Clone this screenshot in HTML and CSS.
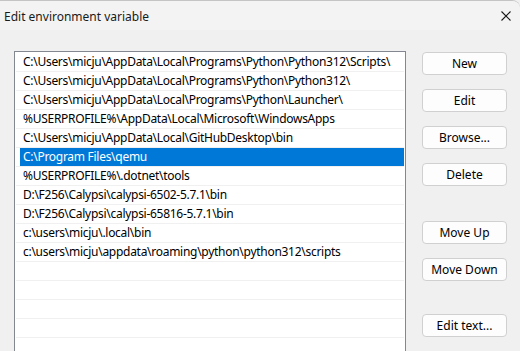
FILE: index.html
```html
<!DOCTYPE html>
<html lang="en">
<head>
    <meta charset="UTF-8">
    <meta name="viewport" content="width=device-width, initial-scale=1.0">
    <title>Edit environment variable</title>
    <link rel="stylesheet" href="styles.css">
</head>
<body>
    <div class="window">
        <div class="titlebar">
            <span class="title">Edit environment variable</span>
            <svg class="close" width="12" height="12" viewBox="0 0 12 12">
                <path d="M1.5 1.5 L10.5 10.5 M10.5 1.5 L1.5 10.5" stroke="#1a1a1a" stroke-width="1.1" fill="none"/>
            </svg>
        </div>

        <div class="content">
            <div class="path-list">
                <div class="row"><span class="cell">C:\Users\micju\AppData\Local\Programs\Python\Python312\Scripts\</span></div>
                <div class="row"><span class="cell">C:\Users\micju\AppData\Local\Programs\Python\Python312\</span></div>
                <div class="row"><span class="cell">C:\Users\micju\AppData\Local\Programs\Python\Launcher\</span></div>
                <div class="row"><span class="cell">%USERPROFILE%\AppData\Local\Microsoft\WindowsApps</span></div>
                <div class="row"><span class="cell">C:\Users\micju\AppData\Local\GitHubDesktop\bin</span></div>
                <div class="row selected"><span class="cell">C:\Program Files\qemu</span></div>
                <div class="row"><span class="cell">%USERPROFILE%\.dotnet\tools</span></div>
                <div class="row"><span class="cell">D:\F256\Calypsi\calypsi-6502-5.7.1\bin</span></div>
                <div class="row"><span class="cell">D:\F256\Calypsi\calypsi-65816-5.7.1\bin</span></div>
                <div class="row"><span class="cell">c:\users\micju\.local\bin</span></div>
                <div class="row"><span class="cell">c:\users\micju\appdata\roaming\python\python312\scripts</span></div>
                <div class="row"><span class="cell"></span></div>
                <div class="row"><span class="cell"></span></div>
                <div class="row"><span class="cell"></span></div>
                <div class="row"><span class="cell"></span></div>
                <div class="row"><span class="cell"></span></div>
            </div>

            <div class="actions">
                <button>New</button>
                <button>Edit</button>
                <button>Browse...</button>
                <button>Delete</button>
                <button class="group-start">Move Up</button>
                <button>Move Down</button>
                <button class="edit-text">Edit text...</button>
            </div>
        </div>
    </div>
</body>
</html>
```

FILE: styles.css
```css
html, body {
    margin: 0;
    padding: 0;
    overflow: hidden;
}

body {
    font-family: 'Noto Sans', 'Open Sans', sans-serif;
    font-size: 12px;
    color: #000;
    background-color: #f0f0f0;
}

.window {
    width: 520px;
    height: 351px;
    box-sizing: border-box;
    border-top: 1px solid #c4c4c4;
    border-top-right-radius: 8px;
    background-color: #f0f0f0;
    overflow: hidden;
}

.titlebar {
    height: 29px;
    display: flex;
    align-items: center;
    justify-content: space-between;
    padding: 1px 8px 0 4px;
    box-sizing: border-box;
    background-color: #f3f3f3;
}

.title {
    color: #1a1a1a;
}

.close {
    display: block;
}

.content {
    display: flex;
    align-items: flex-start;
    padding: 21px 0 0 14px;
}

.path-list {
    width: 392px;
    height: 320px;
    box-sizing: border-box;
    border: 1px solid #828790;
    background-color: #fff;
    padding: 1px 1px 0 1px;
}

.row {
    height: 18px;
    border-bottom: 1px solid #f0f0f0;
    display: flex;
}

.cell {
    flex: 1;
    margin-left: 4px;
    padding-left: 3px;
    line-height: 18px;
    letter-spacing: -0.28px;
    white-space: nowrap;
    overflow: hidden;
}

.selected .cell {
    background-color: #0078d7;
    color: #fff;
}

.actions {
    display: flex;
    flex-direction: column;
    gap: 14px;
    margin-left: 16px;
    padding-top: 1px;
}

button {
    width: 85px;
    height: 23px;
    font-family: inherit;
    font-size: 12px;
    color: #000;
    background-color: #fdfdfd;
    border: 1px solid #d0d0d0;
    border-radius: 4px;
    padding: 0;
}

.group-start {
    margin-top: 21px;
}

.edit-text {
    margin-top: 19px;
}
```
